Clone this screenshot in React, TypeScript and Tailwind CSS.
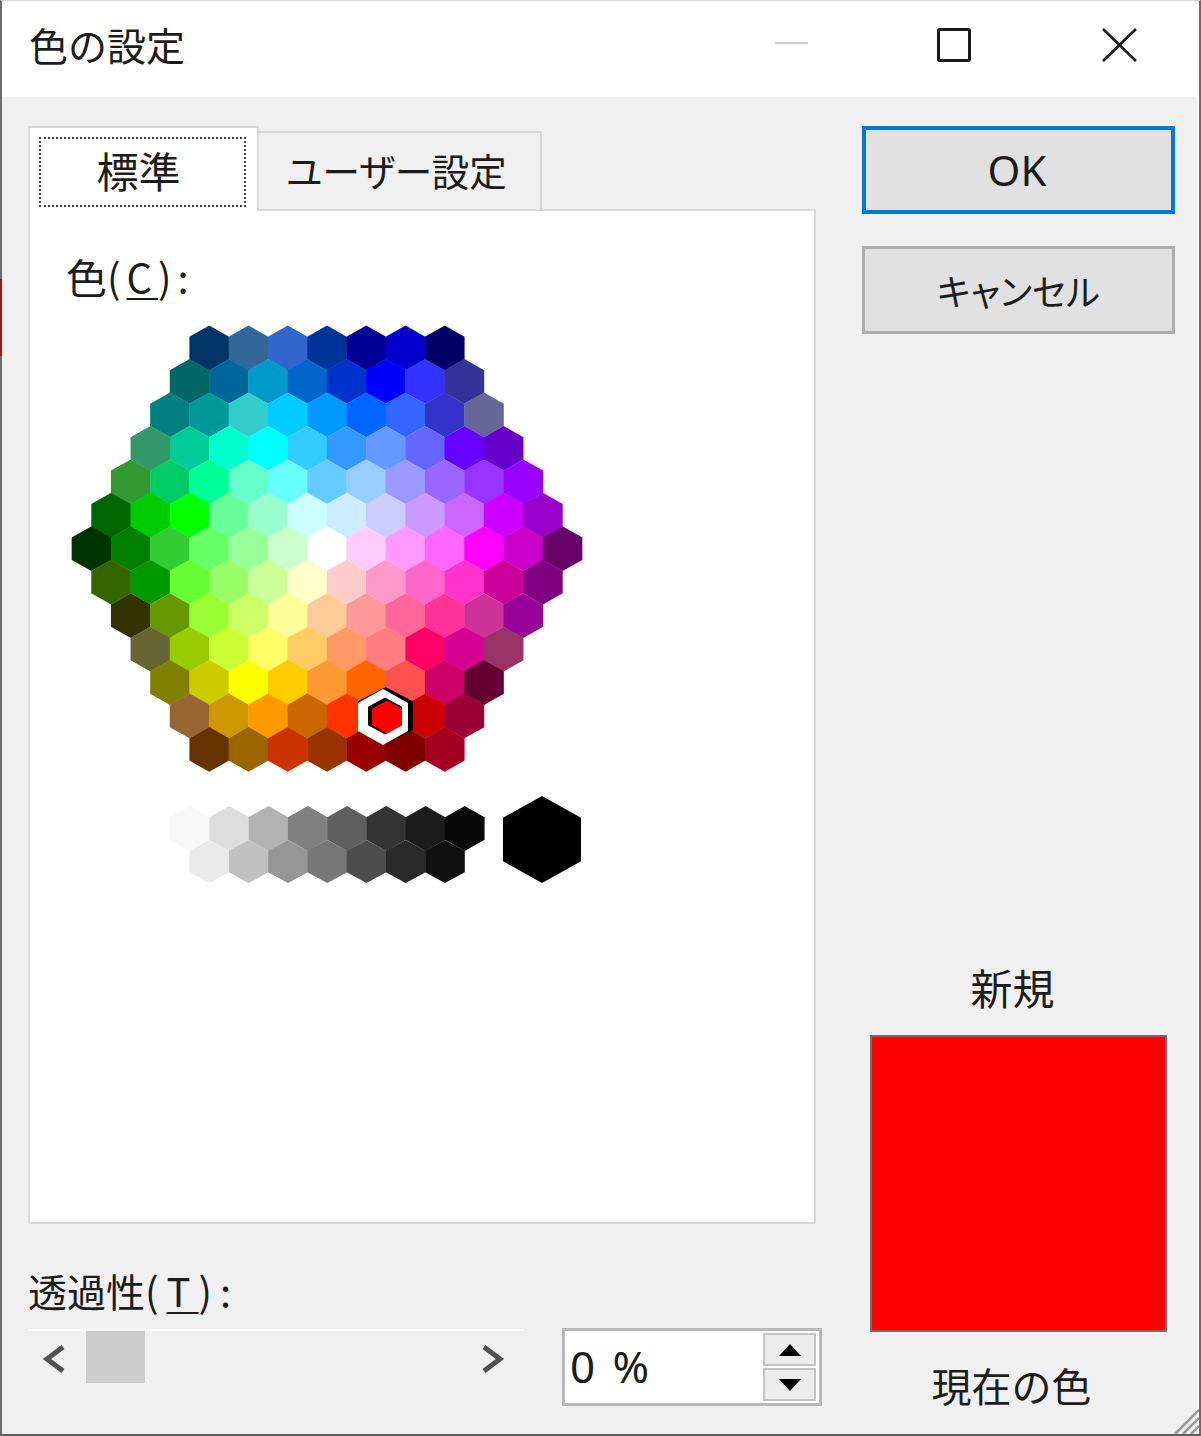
const ROWS = [
  ['003366', '336699', '3366CC', '003399', '000099', '0000CC', '000066'],
  ['006666', '006699', '0099CC', '0066CC', '0033CC', '0000FF', '3333FF', '333399'],
  ['008080', '009999', '33CCCC', '00CCFF', '0099FF', '0066FF', '3366FF', '3333CC', '666699'],
  ['339966', '00CC99', '00FFCC', '00FFFF', '33CCFF', '3399FF', '6699FF', '6666FF', '6600FF', '6600CC'],
  ['339933', '00CC66', '00FF99', '66FFCC', '66FFFF', '66CCFF', '99CCFF', '9999FF', '9966FF', '9933FF', '9900FF'],
  ['006600', '00CC00', '00FF00', '66FF99', '99FFCC', 'CCFFFF', 'CCECFF', 'CCCCFF', 'CC99FF', 'CC66FF', 'CC00FF', '9900CC'],
  ['003300', '008000', '33CC33', '66FF66', '99FF99', 'CCFFCC', 'FFFFFF', 'FFCCFF', 'FF99FF', 'FF66FF', 'FF00FF', 'CC00CC', '660066'],
  ['336600', '009900', '66FF33', '99FF66', 'CCFF99', 'FFFFCC', 'FFCCCC', 'FF99CC', 'FF66CC', 'FF33CC', 'CC0099', '800080'],
  ['333300', '669900', '99FF33', 'CCFF66', 'FFFF99', 'FFCC99', 'FF9999', 'FF6699', 'FF3399', 'CC3399', '990099'],
  ['666633', '99CC00', 'CCFF33', 'FFFF66', 'FFCC66', 'FF9966', 'FF7C80', 'FF0066', 'D60093', '993366'],
  ['808000', 'CCCC00', 'FFFF00', 'FFCC00', 'FF9933', 'FF6600', 'FF5050', 'CC0066', '660033'],
  ['996633', 'CC9900', 'FF9900', 'CC6600', 'FF3300', 'FF0000', 'CC0000', '990033'],
  ['663300', '996600', 'CC3300', '993300', '990000', '800000', 'A50021'],
]

const GRAYS_TOP = ['F8F8F8', 'DDDDDD', 'B2B2B2', '808080', '5F5F5F', '333333', '1C1C1C', '080808']
const GRAYS_BOTTOM = ['EAEAEA', 'C0C0C0', '969696', '777777', '4D4D4D', '292929', '111111']

const STEP_X = 39.25
const STEP_Y = 33.45
// svg origin sits at page (60, 320)
const CENTER_X = 267
const TOP_Y = 29

const hexPoints = (cx: number, cy: number, w: number, h: number) =>
  [
    [cx, cy - h / 2],
    [cx + w / 2, cy - h / 4],
    [cx + w / 2, cy + h / 4],
    [cx, cy + h / 2],
    [cx - w / 2, cy + h / 4],
    [cx - w / 2, cy - h / 4],
  ]
    .map((p) => p.join(','))
    .join(' ')

function ColorHoney() {
  return (
    <svg width="540" height="580" viewBox="0 0 540 580" className="block">
      {ROWS.map((row, r) =>
        row.map((c, i) => (
          <polygon
            key={`${r}-${i}`}
            points={hexPoints(CENTER_X - ((row.length - 1) / 2) * STEP_X + i * STEP_X, TOP_Y + r * STEP_Y, STEP_X + 0.4, 44.8)}
            fill={`#${c}`}
          />
        )),
      )}
      {GRAYS_TOP.map((c, i) => (
        <polygon key={c} points={hexPoints(130 + i * STEP_X, 509.5, STEP_X + 0.4, 45)} fill={`#${c}`} />
      ))}
      {GRAYS_BOTTOM.map((c, i) => (
        <polygon key={c} points={hexPoints(149.5 + i * STEP_X, 542.5, STEP_X + 0.4, 43)} fill={`#${c}`} />
      ))}
      <polygon points={hexPoints(482, 520.5, 78, 87)} fill="#000" />
      {/* selected cell */}
      <polygon points={hexPoints(325.5, 396.5, 55, 57)} fill="#000" />
      <polygon points={hexPoints(323, 398, 50, 56)} fill="#fff" />
      <polygon points={hexPoints(325, 397, 34, 37)} fill="#000" />
      <polygon points={hexPoints(327, 398, 30, 33)} fill="#f00" />
    </svg>
  )
}

export default function App() {
  return (
    <div className="relative w-[1201px] h-[1436px] flex flex-col bg-white border-l-2 border-r-2 border-b-2 border-t border-l-[#6b6b6b] border-r-[#6b6b6b] border-b-[#5f5f5f] border-t-[#d4d4d4] text-[#1c1c1c] font-['Noto_Sans_CJK_JP','Noto_Sans',sans-serif]">
      <div className="absolute left-[-2px] top-[278px] w-[2px] h-[77px] bg-[#a01818]" />

      {/* title bar */}
      <div className="h-[96px] flex items-center bg-white shrink-0">
        <span className="ml-[27px] text-[39px] leading-none mt-[-10px]">色の設定</span>
        <div className="ml-auto flex items-start mr-[62px] mt-[-8px]">
          <svg width="33" height="34" viewBox="0 0 33 34" className="block">
            <line x1="0" y1="15" x2="33" y2="15" stroke="#cfcfcf" strokeWidth="2.5" />
          </svg>
          <svg width="34" height="34" viewBox="0 0 34 34" className="block ml-[129px]">
            <rect x="1.5" y="1.5" width="31" height="31" rx="1" fill="none" stroke="#1a1a1a" strokeWidth="3" />
          </svg>
          <svg width="35" height="34" viewBox="0 0 35 34" className="block ml-[131px]">
            <path d="M1 1 L34 33 M34 1 L1 33" fill="none" stroke="#1a1a1a" strokeWidth="2.6" />
          </svg>
        </div>
      </div>

      {/* body */}
      <div className="flex-1 flex bg-[#f0f0f0] mr-[2px]">
        <div className="w-[860px] pl-[26px] pt-[29px] flex flex-col shrink-0">
          {/* tabs */}
          <div className="flex items-end h-[85px] relative z-10 mb-[-2px]">
            <div className="w-[231px] h-[85px] bg-white border-2 border-b-0 border-[#d9d9d9] pt-[9px] pl-[9px]">
              <div className="w-[207px] h-[70px] border-2 border-dotted border-[#444] flex items-center justify-center text-[42px] leading-none pr-[8px] pb-[5px]">
                標準
              </div>
            </div>
            <div className="w-[283px] h-[80px] bg-[#f0f0f0] border-2 border-l-0 border-[#d9d9d9] flex items-center justify-center text-[37.5px] leading-none [font-feature-settings:'palt'] pb-[2px] pr-[6px]">
              ユーザー設定
            </div>
          </div>

          {/* panel */}
          <div className="w-[788px] h-[1015px] bg-white border-2 border-[#d9d9d9] pt-[40px] shrink-0">
            <div className="ml-[36px] h-[50px] flex items-center text-[41px] leading-none">
              色<span className="tracking-[6px] text-[40px]">(<span className="underline underline-offset-[5px] decoration-2">C</span>):</span>
            </div>
            <div className="ml-[30px] mt-[18px]">
              <ColorHoney />
            </div>
          </div>

          {/* transparency */}
          <div className="mt-[41px] h-[50px] flex items-center text-[39px] leading-none">
            透過性<span className="tracking-[8px] text-[40px]">(<span className="underline underline-offset-[5px] decoration-2">T</span>):</span>
          </div>
          <div className="flex items-start mt-[14px]">
            <div className="w-[496px] h-[56px] border-t-2 border-white flex items-center">
              <svg width="24" height="28" viewBox="0 0 24 28" className="block ml-[14px] mt-[2px]">
                <path d="M21 2 L5 14 L21 26" fill="none" stroke="#505050" strokeWidth="5" />
              </svg>
              <div className="w-[59px] h-[52px] bg-[#cdcdcd] ml-[20px] self-start" />
              <svg width="24" height="28" viewBox="0 0 24 28" className="block ml-auto mr-[19px] mt-[2px]">
                <path d="M3 2 L19 14 L3 26" fill="none" stroke="#505050" strokeWidth="5" />
              </svg>
            </div>
            <div className="ml-[38px] w-[260px] h-[78px] mt-[-1px] bg-white border-[3px] border-[#b8b8b8] flex items-center">
              <span className="ml-[5px] text-[44px] leading-none tracking-[3px] mt-[-2px] font-['Noto_Sans',sans-serif]">0 %</span>
              <div className="ml-auto mr-[3px] w-[53px] flex flex-col gap-[2px]">
                <div className="h-[33px] bg-[#ececec] border-2 border-[#c4c4c4] flex items-center justify-center">
                  <svg width="22" height="12" viewBox="0 0 22 12" className="block">
                    <path d="M11 0 L22 12 L0 12 Z" fill="#000" />
                  </svg>
                </div>
                <div className="h-[33px] bg-[#ececec] border-2 border-[#c4c4c4] flex items-center justify-center">
                  <svg width="22" height="12" viewBox="0 0 22 12" className="block">
                    <path d="M0 0 L22 0 L11 12 Z" fill="#000" />
                  </svg>
                </div>
              </div>
            </div>
          </div>
        </div>

        {/* right column */}
        <div className="w-[313px] pt-[29px] flex flex-col items-center shrink-0">
          <div className="w-[313px] h-[88px] bg-[#e1e1e1] border-[4px] border-[#0078d7] flex items-center justify-center text-[42px] leading-none pr-[3px] font-['Noto_Sans',sans-serif]">
            OK
          </div>
          <div className="w-[313px] h-[88px] mt-[32px] bg-[#e1e1e1] border-[3px] border-[#adadad] flex items-center justify-center text-[36px] leading-none [font-feature-settings:'palt']">
            キャンセル
          </div>
          <div className="mt-[628px] h-[50px] flex items-center text-[42px] leading-none mr-[12px]">新規</div>
          <div className="w-[297px] h-[297px] mt-[23px] bg-[#ff0000] border-2 border-[#6e6e6e]" />
          <div className="mt-[28px] h-[50px] flex items-center text-[40px] leading-none mr-[14px]">現在の色</div>
        </div>
      </div>

      {/* size grip */}
      <svg width="30" height="30" viewBox="0 0 30 30" className="absolute right-0 bottom-0 block">
        <path d="M6 30 L30 6 M14 30 L30 14 M22 30 L30 22" stroke="#9a9a9a" strokeWidth="2.5" fill="none" />
      </svg>
    </div>
  )
}
